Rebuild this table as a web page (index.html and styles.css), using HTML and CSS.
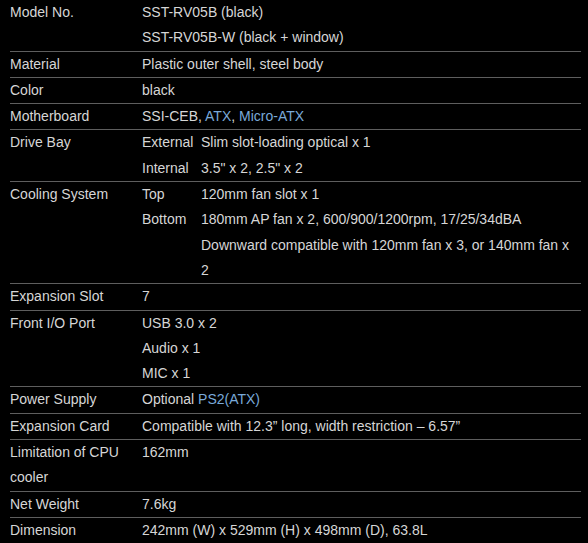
FILE: index.html
```html
<!DOCTYPE html>
<html>
<head>
<meta charset="utf-8">
<link rel="stylesheet" href="styles.css">
</head>
<body>
<div class="spec">
  <div class="row">
    <div class="label">Model No.</div>
    <div class="value"><div>SST-RV05B (black)</div><div>SST-RV05B-W (black + window)</div></div>
  </div>
  <div class="row">
    <div class="label">Material</div>
    <div class="value">Plastic outer shell, steel body</div>
  </div>
  <div class="row">
    <div class="label">Color</div>
    <div class="value">black</div>
  </div>
  <div class="row">
    <div class="label">Motherboard</div>
    <div class="value">SSI-CEB, <span class="link">ATX</span>, <span class="link">Micro-ATX</span></div>
  </div>
  <div class="row sub">
    <div class="label">Drive Bay</div>
    <div class="subs">
      <div class="subrow"><div class="sublabel">External</div><div class="value">Slim slot-loading optical x 1</div></div>
      <div class="subrow"><div class="sublabel">Internal</div><div class="value">3.5" x 2, 2.5" x 2</div></div>
    </div>
  </div>
  <div class="row sub">
    <div class="label">Cooling System</div>
    <div class="subs">
      <div class="subrow"><div class="sublabel">Top</div><div class="value">120mm fan slot x 1</div></div>
      <div class="subrow"><div class="sublabel">Bottom</div><div class="value"><div>180mm AP fan x 2, 600/900/1200rpm, 17/25/34dBA</div><div>Downward compatible with 120mm fan x 3, or 140mm fan x 2</div></div></div>
    </div>
  </div>
  <div class="row">
    <div class="label">Expansion Slot</div>
    <div class="value">7</div>
  </div>
  <div class="row">
    <div class="label">Front I/O Port</div>
    <div class="value"><div>USB 3.0 x 2</div><div>Audio x 1</div><div>MIC x 1</div></div>
  </div>
  <div class="row">
    <div class="label">Power Supply</div>
    <div class="value">Optional <span class="link">PS2(ATX)</span></div>
  </div>
  <div class="row">
    <div class="label">Expansion Card</div>
    <div class="value">Compatible with 12.3” long, width restriction – 6.57”</div>
  </div>
  <div class="row">
    <div class="label">Limitation of CPU cooler</div>
    <div class="value">162mm</div>
  </div>
  <div class="row">
    <div class="label">Net Weight</div>
    <div class="value">7.6kg</div>
  </div>
  <div class="row">
    <div class="label">Dimension</div>
    <div class="value">242mm (W) x 529mm (H) x 498mm (D), 63.8L</div>
  </div>
</div>
</body>
</html>
```
FILE: styles.css
```css
html, body {
  margin: 0;
  padding: 0;
  background: #000;
}
body {
  font-family: "Liberation Sans", Arial, sans-serif;
  font-size: 14px;
  line-height: 25.3px;
  color: #d6d6d6;
}
.spec {
  padding: 0 7px 0 10px;
}
.row {
  display: grid;
  grid-template-columns: 132px 1fr;
  border-top: 1px solid #5e5e5e;
}
.row:first-child {
  border-top: none;
}
.label {
  padding-right: 4px;
}
.value {
  padding-right: 10px;
}
.subs {
  display: flex;
  flex-direction: column;
}
.subrow {
  display: grid;
  grid-template-columns: 59px 1fr;
}
.link {
  color: #79a9d9;
}
```
